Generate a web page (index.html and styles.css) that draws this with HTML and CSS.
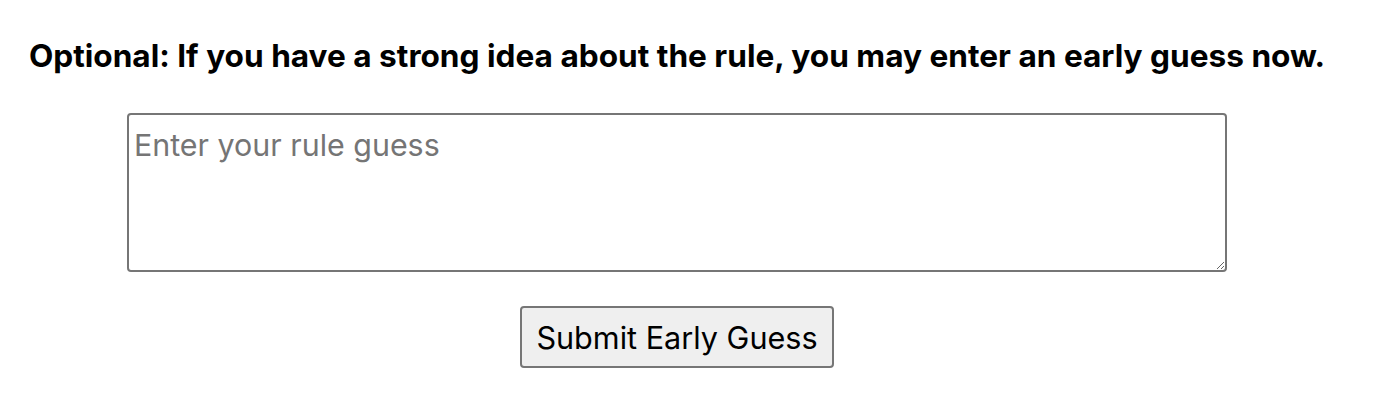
FILE: index.html
```html
<!DOCTYPE html>
<html>
<head>
<meta charset="utf-8">
<link rel="stylesheet" href="styles.css">
</head>
<body>
<div class="wrap">
  <h2 class="title">Optional: If you have a strong idea about the rule, you may enter an early guess now.</h2>
  <textarea class="guess" placeholder="Enter your rule guess"></textarea>
  <button class="submit">Submit Early Guess</button>
</div>
</body>
</html>
```

FILE: styles.css
```css
html, body {
  margin: 0;
  padding: 0;
  background: #fff;
}
.wrap {
  width: 1354px;
  display: flex;
  flex-direction: column;
  align-items: center;
  font-family: Inter, "Liberation Sans", sans-serif;
  padding-top: 38px;
}
.title {
  margin: 0;
  font-size: 31.6px;
  font-weight: bold;
  line-height: 36px;
  color: #000;
  text-align: center;
  white-space: nowrap;
}
.guess {
  box-sizing: border-box;
  width: 1100px;
  height: 159px;
  margin-top: 39px;
  border: 2px solid #767676;
  border-radius: 4px;
  padding: 12px 5px;
  font-family: Inter, "Liberation Sans", sans-serif;
  font-size: 30.4px;
  line-height: 36px;
  resize: vertical;
}
.guess::placeholder {
  color: #757575;
}
.submit {
  box-sizing: border-box;
  margin-top: 34px;
  width: 314px;
  height: 62px;
  font-family: Inter, "Liberation Sans", sans-serif;
  font-size: 30.6px;
  color: #000;
  background: #efefef;
  border: 2px solid #767676;
  border-radius: 4px;
  padding: 0;
}
```
